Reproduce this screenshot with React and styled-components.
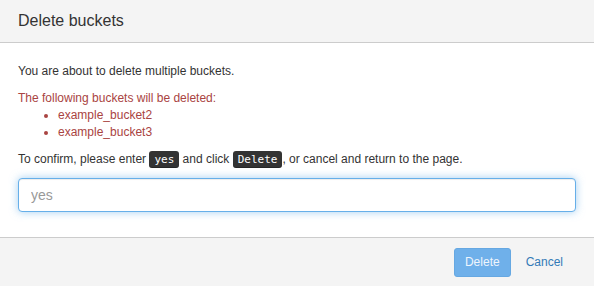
import React from "react";
import styled, { createGlobalStyle } from "styled-components";

const Global = createGlobalStyle`
  html, body { margin: 0; padding: 0; background: #fff; }
  body { font-family: "Liberation Sans", Arial, sans-serif; color: #333; }
  * { box-sizing: border-box; }
`;

const Modal = styled.div`
  width: 594px;
  height: 286px;
  display: flex;
  flex-direction: column;
  background: #fff;
`;

const Header = styled.div`
  height: 43px;
  flex: none;
  display: flex;
  align-items: center;
  padding: 0 18px 1px;
  background: #f4f4f4;
  border-bottom: 1px solid #cccccc;
`;

const Title = styled.h4`
  margin: 0;
  font-size: 16px;
  font-weight: normal;
  color: #333;
`;

const Body = styled.div`
  flex: 1;
  padding: 20px 18px 0;
  font-size: 12px;
  line-height: 17px;
`;

const Para = styled.p`
  margin: 0 0 ${(p) => (p.$tight ? "0" : "10px")};
  color: ${(p) => (p.$danger ? "#a94442" : "#333")};
`;

const List = styled.ul`
  margin: 0 0 11px;
  padding-left: 40px;
  color: #a94442;
  line-height: 16.5px;
`;

const Kbd = styled.kbd`
  display: inline-block;
  padding: 0 5px;
  font-family: "DejaVu Sans Mono", monospace;
  font-size: 11px;
  line-height: 17px;
  color: #fff;
  background: #333;
  border-radius: 3px;
  box-shadow: inset 0 -1px 0 rgba(0, 0, 0, 0.25);
`;

const Input = styled.input`
  display: block;
  width: 100%;
  height: 34px;
  margin-top: 0;
  padding: 6px 12px;
  font-family: "Liberation Sans", Arial, sans-serif;
  font-size: 14px;
  color: #555;
  caret-color: #333;
  background: #fff;
  border: 1px solid #66afe9;
  border-radius: 4px;
  outline: 0;
  box-shadow: inset 0 1px 1px rgba(0, 0, 0, 0.075), 0 0 8px rgba(102, 175, 233, 0.6);
  &::placeholder { color: #999; }
`;

const Footer = styled.div`
  flex: none;
  height: 49px;
  display: flex;
  justify-content: flex-end;
  align-items: flex-start;
  gap: 2px;
  padding: 10px 18px 0;
  background: #f4f4f4;
  border-top: 1px solid #cccccc;
`;

const Button = styled.button`
  height: 29px;
  padding: 5px ${(p) => (p.$link ? "12px" : "10px")};
  font-family: "Liberation Sans", Arial, sans-serif;
  font-size: 12px;
  line-height: 17px;
  border-radius: 3px;
  cursor: pointer;
  color: ${(p) => (p.$link ? "#337ab7" : "#eef5fd")};
  background: ${(p) => (p.$link ? "transparent" : "#6fb0ea")};
  border: 1px solid ${(p) => (p.$link ? "transparent" : "#66a8e2")};
`;

export default function App() {
  return (
    <>
      <Global />
      <Modal>
        <Header>
          <Title>Delete buckets</Title>
        </Header>
        <Body>
          <Para>You are about to delete multiple buckets.</Para>
          <Para $danger $tight>The following buckets will be deleted:</Para>
          <List>
            <li>example_bucket2</li>
            <li>example_bucket3</li>
          </List>
          <Para>
            To confirm, please enter <Kbd>yes</Kbd> and click <Kbd>Delete</Kbd>, or cancel and return to the page.
          </Para>
          <Input placeholder="yes" autoFocus />
        </Body>
        <Footer>
          <Button disabled>Delete</Button>
          <Button $link>Cancel</Button>
        </Footer>
      </Modal>
    </>
  );
}
